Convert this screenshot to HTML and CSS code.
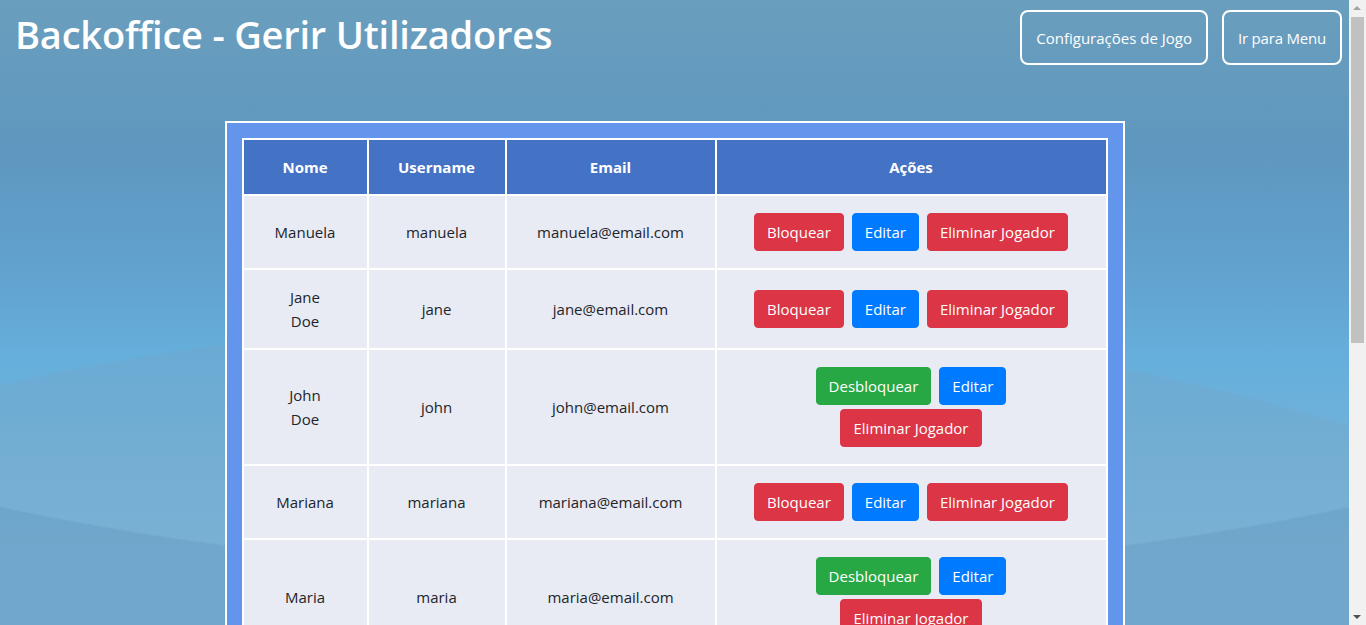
FILE: index.html
```html
<!DOCTYPE html>
<html lang="pt">
<head>
<meta charset="utf-8">
<title>Backoffice - Gerir Utilizadores</title>
<link rel="stylesheet" href="styles.css">
</head>
<body>
<div class="page">
  <header class="topbar">
    <h1 class="title">Backoffice - Gerir Utilizadores</h1>
    <nav class="top-actions">
      <button class="btn-outline">Configurações de Jogo</button>
      <button class="btn-outline">Ir para Menu</button>
    </nav>
  </header>
  <main class="panel">
    <table class="users">
      <thead>
        <tr>
          <th class="c-name">Nome</th>
          <th class="c-user">Username</th>
          <th class="c-email">Email</th>
          <th class="c-actions">Ações</th>
        </tr>
      </thead>
      <tbody>
        <tr>
          <td><div class="name">Manuela</div></td>
          <td>manuela</td>
          <td>manuela@email.com</td>
          <td><div class="actions"><button class="btn red">Bloquear</button><button class="btn blue">Editar</button><button class="btn red">Eliminar Jogador</button></div></td>
        </tr>
        <tr>
          <td><div class="name">Jane Doe</div></td>
          <td>jane</td>
          <td>jane@email.com</td>
          <td><div class="actions"><button class="btn red">Bloquear</button><button class="btn blue">Editar</button><button class="btn red">Eliminar Jogador</button></div></td>
        </tr>
        <tr>
          <td><div class="name">John Doe</div></td>
          <td>john</td>
          <td>john@email.com</td>
          <td><div class="actions"><button class="btn green">Desbloquear</button><button class="btn blue">Editar</button><button class="btn red">Eliminar Jogador</button></div></td>
        </tr>
        <tr>
          <td><div class="name">Mariana</div></td>
          <td>mariana</td>
          <td>mariana@email.com</td>
          <td><div class="actions"><button class="btn red">Bloquear</button><button class="btn blue">Editar</button><button class="btn red">Eliminar Jogador</button></div></td>
        </tr>
        <tr>
          <td><div class="name">Maria</div></td>
          <td>maria</td>
          <td>maria@email.com</td>
          <td><div class="actions"><button class="btn green">Desbloquear</button><button class="btn blue">Editar</button><button class="btn red">Eliminar Jogador</button></div></td>
        </tr>
      </tbody>
    </table>
  </main>
</div>
<div class="scrollbar" aria-hidden="true">
  <div class="sb-up"></div>
  <div class="sb-thumb"></div>
  <div class="sb-down"></div>
</div>
</body>
</html>
```
FILE: styles.css
```css
* { box-sizing: border-box; }

html, body {
  margin: 0;
  padding: 0;
}

html {
  background-color: #64a6d4;
  background-attachment: fixed;
  background-image:
    radial-gradient(ellipse 1318px 475px at 675px 100px, rgba(0,0,0,0) 99.6%, rgba(80,130,170,0.22) 100%),
    radial-gradient(ellipse 1200px 480px at 600px 800px, rgba(120,160,190,0.28) 99.6%, rgba(0,0,0,0) 100%),
    linear-gradient(180deg, #6a9ebd 0px, #5e97bf 150px, #62a3d0 280px, #66afdc 360px, #72b3da 460px, #7ab8de 560px, #7ab8de 625px);
}

body {
  font-family: "Open Sans", "Noto Sans", sans-serif;
  font-size: 16px;
  line-height: 1.5;
  color: #212529;
}

.page {
  margin-right: 17px;
  min-height: 100vh;
  padding-bottom: 40px;
}

.topbar {
  display: flex;
  justify-content: space-between;
  align-items: flex-start;
  padding: 10px 7px 0 15px;
}

.title {
  margin: 0;
  font-size: 38px;
  font-weight: 600;
  line-height: 48px;
  color: #ffffff;
  letter-spacing: -0.2px;
}

.top-actions {
  display: flex;
  gap: 14px;
}

.btn-outline {
  height: 55px;
  padding: 0 14px;
  border: 2px solid #ffffff;
  border-radius: 8px;
  background: transparent;
  color: #ffffff;
  font-family: inherit;
  font-size: 15px;
  cursor: pointer;
}

.top-actions .btn-outline:last-child {
  padding: 0 14px;
  letter-spacing: -0.2px;
}

.panel {
  width: 900px;
  margin: 56px auto 0;
  padding: 15px;
  border: 2px solid #ffffff;
  background: #6495ed;
}

.users {
  width: 100%;
  table-layout: fixed;
  border-collapse: separate;
  border-spacing: 2px;
  background: #ffffff;
}

.users th,
.users td {
  padding: 15px;
  text-align: center;
  vertical-align: middle;
}

.users th {
  background: #4472c4;
  color: #ffffff;
  font-weight: 700;
  font-size: 15px;
  line-height: 24px;
}

.users td {
  background: #e8eaf4;
  font-size: 15px;
  line-height: 24px;
}

.c-name { width: 123px; }
.c-user { width: 136px; }
.c-email { width: 208px; }

.name {
  width: min-content;
  margin: 0 auto;
}

.actions {
  display: flex;
  flex-wrap: wrap;
  justify-content: center;
  gap: 4px 8px;
  max-width: 330px;
  margin: 0 auto;
  padding: 2px 0;
}

.btn {
  height: 38px;
  padding: 0 12px;
  border: 1px solid transparent;
  border-radius: 4px;
  color: #ffffff;
  font-family: inherit;
  font-size: 15px;
  line-height: 24px;
  cursor: pointer;
}

.btn.red { background: #dc3545; border-color: #dc3545; }
.btn.blue { background: #007bff; border-color: #007bff; }
.btn.green { background: #28a745; border-color: #28a745; }

/* fake window scrollbar, drawn over the right edge */
.scrollbar {
  position: fixed;
  top: 0;
  right: 0;
  width: 17px;
  height: 100vh;
  background: #f1f1f1;
}

.sb-up {
  position: absolute;
  top: 6px;
  left: 4px;
  width: 0;
  height: 0;
  border-left: 4px solid transparent;
  border-right: 4px solid transparent;
  border-bottom: 4px solid #a3a3a3;
}

.sb-thumb {
  position: absolute;
  top: 17px;
  left: 2px;
  width: 13px;
  height: 326px;
  background: #c1c1c1;
}

.sb-down {
  position: absolute;
  bottom: 6px;
  left: 4px;
  width: 0;
  height: 0;
  border-left: 4px solid transparent;
  border-right: 4px solid transparent;
  border-top: 4px solid #505050;
}
```
